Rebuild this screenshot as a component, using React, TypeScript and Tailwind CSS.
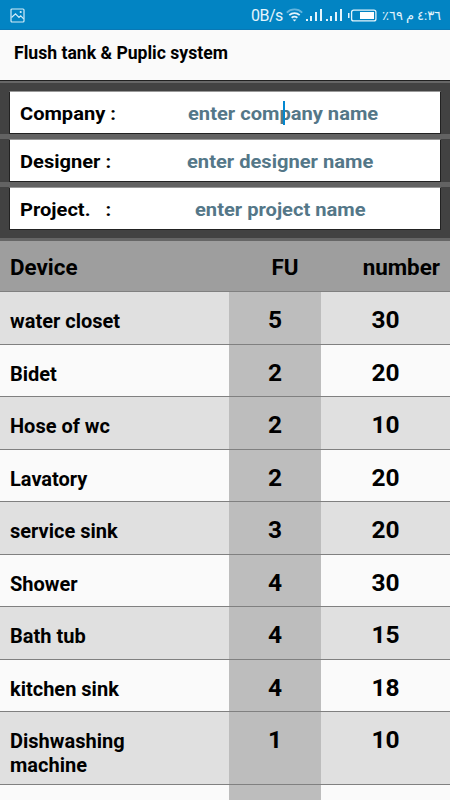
const fields = [
  { label: 'Company :', hint: 'enter company name', offset: 'ml-[178px]', focused: true },
  { label: 'Designer :', hint: 'enter designer name', offset: 'ml-[177px]' },
  { label: 'Project.   :', hint: 'enter project name', offset: 'ml-[185px]' },
];

const devices = [
  { name: 'water closet', fu: 5, count: 30 },
  { name: 'Bidet', fu: 2, count: 20 },
  { name: 'Hose of wc', fu: 2, count: 10 },
  { name: 'Lavatory', fu: 2, count: 20 },
  { name: 'service sink', fu: 3, count: 20 },
  { name: 'Shower', fu: 4, count: 30 },
  { name: 'Bath tub', fu: 4, count: 15 },
  { name: 'kitchen sink', fu: 4, count: 18 },
  { name: 'Dishwashing machine', fu: 1, count: 10, tall: true },
];

function PictureIcon() {
  return (
    <svg width="15" height="15" viewBox="0 0 15 15" fill="none" stroke="#d3ecf8" strokeWidth="1.2">
      <rect x="1" y="1" width="13" height="13" rx="1" />
      <path d="M1.5 9.5 5.5 5.8 9 9.5l1.7-1.6 3 3" />
      <circle cx="10.7" cy="4" r="0.5" fill="#d3ecf8" />
    </svg>
  );
}

function WifiIcon() {
  return (
    <svg width="17" height="14" viewBox="0 0 17 14" fill="none" strokeWidth="1.8">
      <path d="M0.8 4.6C5 .4 12 .4 16.2 4.6" stroke="#65b5de" />
      <path d="M3.3 7.2c3-2.8 7.4-2.8 10.4 0" stroke="#e4f4fc" />
      <path d="M5.6 9.8c1.8-1.5 4-1.5 5.8 0" stroke="#e4f4fc" />
      <path d="M8.5 13.6 6.6 11.6h3.8z" fill="#e4f4fc" />
    </svg>
  );
}

function SignalIcon() {
  return (
    <svg width="16" height="12" viewBox="0 0 16 12" fill="#e4f4fc">
      <rect x="0" y="10" width="2" height="2" />
      <rect x="4" y="7" width="2" height="5" />
      <rect x="9" y="3" width="2" height="9" />
      <rect x="14" y="0" width="2" height="12" />
    </svg>
  );
}

function BatteryIcon() {
  return (
    <svg width="29" height="13" viewBox="0 0 29 13" fill="none">
      <rect x="0" y="4" width="1.5" height="5" fill="#e4f4fc" />
      <rect x="3.6" y="1.1" width="24.3" height="10.8" rx="2" stroke="#e4f4fc" strokeWidth="1.3" />
      <rect x="12" y="3" width="14" height="7" fill="#fff" />
    </svg>
  );
}

function StatusBar() {
  return (
    <div className="flex h-[30px] items-center border-b border-[#0878b5] bg-[#0284c3] pt-px pl-[10px] text-[#e4f4fc]">
      <PictureIcon />
      <span className="ml-[226px] w-[32px] shrink-0 pt-px text-[16px] leading-none tracking-[-0.5px] whitespace-nowrap">0B/s</span>
      <span className="ml-[3px] shrink-0"><WifiIcon /></span>
      <span className="ml-[3px] shrink-0"><SignalIcon /></span>
      <span className="ml-[4px] shrink-0"><SignalIcon /></span>
      <span className="ml-[6px] shrink-0"><BatteryIcon /></span>
      <span className="ml-[5px] flex text-[13px] leading-none whitespace-nowrap">
        <bdi className="w-[19px]">٪٦٩</bdi>
        <bdi className="ml-[6px] w-[7px]">م</bdi>
        <bdi className="ml-[3px] tracking-[-0.4px]">٤:٣٦</bdi>
      </span>
    </div>
  );
}

export default function App() {
  return (
    <div className="h-[800px] w-[450px] overflow-hidden bg-[#fafafa] font-['Roboto','DejaVu_Sans',sans-serif] text-black">
      <StatusBar />
      <div className="h-[50px] pt-[11px] pl-[14px] text-[17.6px] leading-[24px] font-bold whitespace-nowrap">
        Flush tank &amp; Puplic system
      </div>

      <div className="h-[161px] border-t border-[#202020] bg-[#666]">
        <div className="mt-[2px] h-[155px] bg-[#424242] pt-[8px]">
          {fields.map((f, i) => (
            <div key={f.label} className={i < 2 ? 'border-b-[5px] border-[#636363]' : ''}>
              <div className="mx-[9px] flex h-[43px] items-center border border-[#222] border-t-[#999] bg-white pt-[2px]">
                <div className="flex text-[18.5px] leading-[24px] font-bold whitespace-pre">
                  <span className="w-0 origin-left translate-x-[10px] scale-x-[1.085]">{f.label}</span>
                  <div className={`relative ${f.offset}`}>
                    <span className="block origin-left scale-x-[1.087] text-[#547788]">{f.hint}</span>
                    {f.focused && <span className="absolute -top-[1px] left-[95px] h-[24px] w-[2px] bg-[#0288d1]" />}
                  </div>
                </div>
              </div>
            </div>
          ))}
        </div>
      </div>

      <div className="flex h-[51px] items-center border-b border-[#808080] bg-[#9e9e9e] pt-[3px] text-[22.4px] font-bold">
        <span className="w-[229px] pl-[10px]">Device</span>
        <span className="w-[112px] text-center">FU</span>
        <span className="flex-1 pr-[10px] text-right">number</span>
      </div>

      {devices.map((d, i) => (
        <div
          key={d.name}
          className={`flex border-b border-[#808080] ${d.tall ? 'h-[73px]' : 'h-[52.5px]'} ${i % 2 ? 'bg-[#fafafa]' : 'bg-[#e0e0e0]'}`}
        >
          <div className="w-[229px] pt-[18px] pr-[60px] pl-[10px] text-[20px] leading-[23.5px] font-bold">{d.name}</div>
          <div className="w-[92px] bg-[#bdbdbd] pt-[12px] text-center text-[24.5px] leading-[32px] font-bold">{d.fu}</div>
          <div className="w-[129px] pt-[12px] text-center text-[24.5px] leading-[32px] font-bold">{d.count}</div>
        </div>
      ))}
      <div className="flex h-[20px]">
        <div className="ml-[229px] w-[92px] bg-[#bdbdbd]" />
      </div>
    </div>
  );
}
